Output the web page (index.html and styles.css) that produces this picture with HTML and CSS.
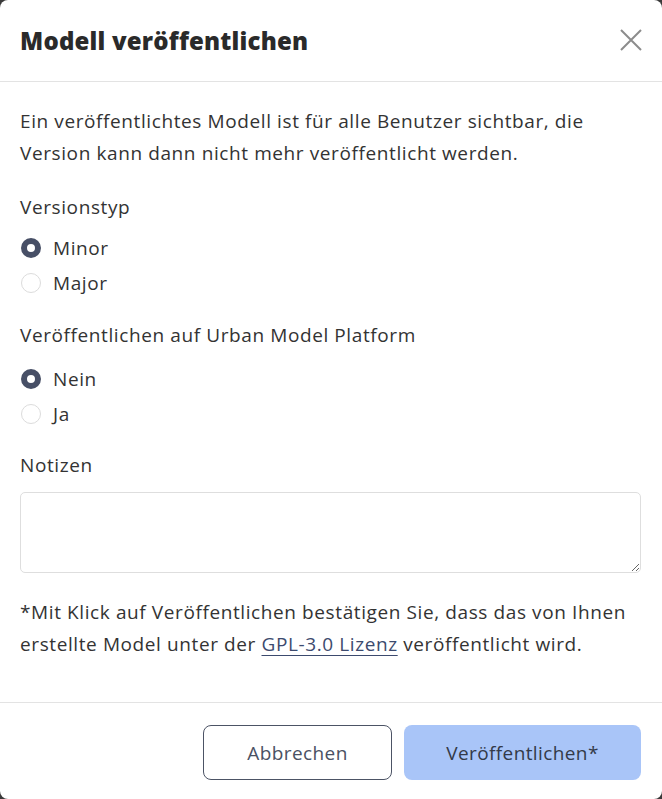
FILE: index.html
```html
<!DOCTYPE html>
<html lang="de">
<head>
<meta charset="utf-8">
<title>Modell veröffentlichen</title>
<link rel="stylesheet" href="styles.css">
</head>
<body>
<div class="dialog">
  <header class="dialog-header">
    <h1 class="dialog-title">Modell veröffentlichen</h1>
    <button class="close-btn" aria-label="Schließen">
      <svg width="22" height="22" viewBox="0 0 22 22"><path d="M1 1 L21 21 M21 1 L1 21" stroke="#8c8c8c" stroke-width="2" fill="none"/></svg>
    </button>
  </header>
  <main class="dialog-body">
    <p class="intro">Ein veröffentlichtes Modell ist für alle Benutzer sichtbar, die Version kann dann nicht mehr veröffentlicht werden.</p>
    <div class="field field-version">
      <div class="field-label">Versionstyp</div>
      <div class="options">
        <label class="option"><span class="radio checked"></span>Minor</label>
        <label class="option"><span class="radio"></span>Major</label>
      </div>
    </div>
    <div class="field field-ump">
      <div class="field-label">Veröffentlichen auf Urban Model Platform</div>
      <div class="options">
        <label class="option"><span class="radio checked"></span>Nein</label>
        <label class="option"><span class="radio"></span>Ja</label>
      </div>
    </div>
    <div class="field field-notes">
      <div class="field-label">Notizen</div>
      <textarea class="notes"></textarea>
    </div>
    <p class="footnote">*Mit Klick auf Veröffentlichen bestätigen Sie, dass das von Ihnen erstellte Model unter der <a href="#" class="link">GPL-3.0 Lizenz</a> veröffentlicht wird.</p>
  </main>
  <footer class="dialog-footer">
    <button class="btn btn-secondary">Abbrechen</button>
    <button class="btn btn-primary">Veröffentlichen*</button>
  </footer>
</div>
</body>
</html>
```

FILE: styles.css
```css
* { box-sizing: border-box; }
html, body { margin: 0; padding: 0; }
body {
  background: #3a3a3a;
  font-family: "Open Sans", "Noto Sans", sans-serif;
  color: #333333;
}
.dialog {
  width: 662px;
  height: 799px;
  background: #ffffff;
  border-radius: 8px;
  display: flex;
  flex-direction: column;
}
.dialog-header {
  height: 82px;
  border-bottom: 1px solid #e3e3e3;
  display: flex;
  align-items: center;
  justify-content: space-between;
  padding: 0 20px 0 20px;
}
.dialog-title {
  margin: 0;
  font-size: 24px;
  font-weight: 800;
  color: #2a2a2a;
  letter-spacing: 0.2px;
}
.close-btn {
  background: none;
  border: 0;
  padding: 0;
  width: 22px;
  height: 22px;
  display: flex;
  cursor: pointer;
  margin-top: -1px;
}
.dialog-body {
  flex: 1;
  padding: 23px 21px 0 20px;
  font-size: 19px;
  letter-spacing: 0.6px;
}
.intro, .footnote {
  margin: 0;
  line-height: 32px;
}
.field-label {
  line-height: 28px;
}
.field-version { margin-top: 24px; }
.field-ump { margin-top: 21px; }
.field-notes { margin-top: 20px; }
.options {
  display: flex;
  flex-direction: column;
  margin-top: 9px;
}
.field-ump .options { margin-top: 12px; }
.option {
  display: flex;
  align-items: center;
  height: 35px;
  gap: 12px;
}
.radio {
  width: 20px;
  height: 20px;
  border-radius: 50%;
  border: 1px solid #dcdcdc;
  background: #fff;
  margin-left: 1px;
  flex: none;
}
.radio.checked {
  border: 6px solid #474f66;
}
.notes {
  display: block;
  width: 100%;
  height: 81px;
  margin-top: 13px;
  border: 1px solid #dedede;
  border-radius: 5px;
  font-family: inherit;
  font-size: 16px;
  resize: vertical;
  outline: none;
}
.footnote { margin-top: 23px; }
.link {
  color: #3c4a6e;
  text-decoration: underline;
  text-underline-offset: 4px;
}
.dialog-footer {
  height: 97px;
  border-top: 1px solid #e3e3e3;
  display: flex;
  justify-content: flex-end;
  gap: 12px;
  padding: 22px 21px 0 0;
}
.btn {
  height: 55px;
  border-radius: 8px;
  font-family: inherit;
  font-size: 19px;
  letter-spacing: 0.4px;
  cursor: pointer;
}
.btn-secondary {
  width: 189px;
  background: #fff;
  border: 1px solid #4c5365;
  color: #4a5163;
}
.btn-primary {
  width: 237px;
  background: #a9c5f8;
  border: 0;
  color: #333a48;
}
```
